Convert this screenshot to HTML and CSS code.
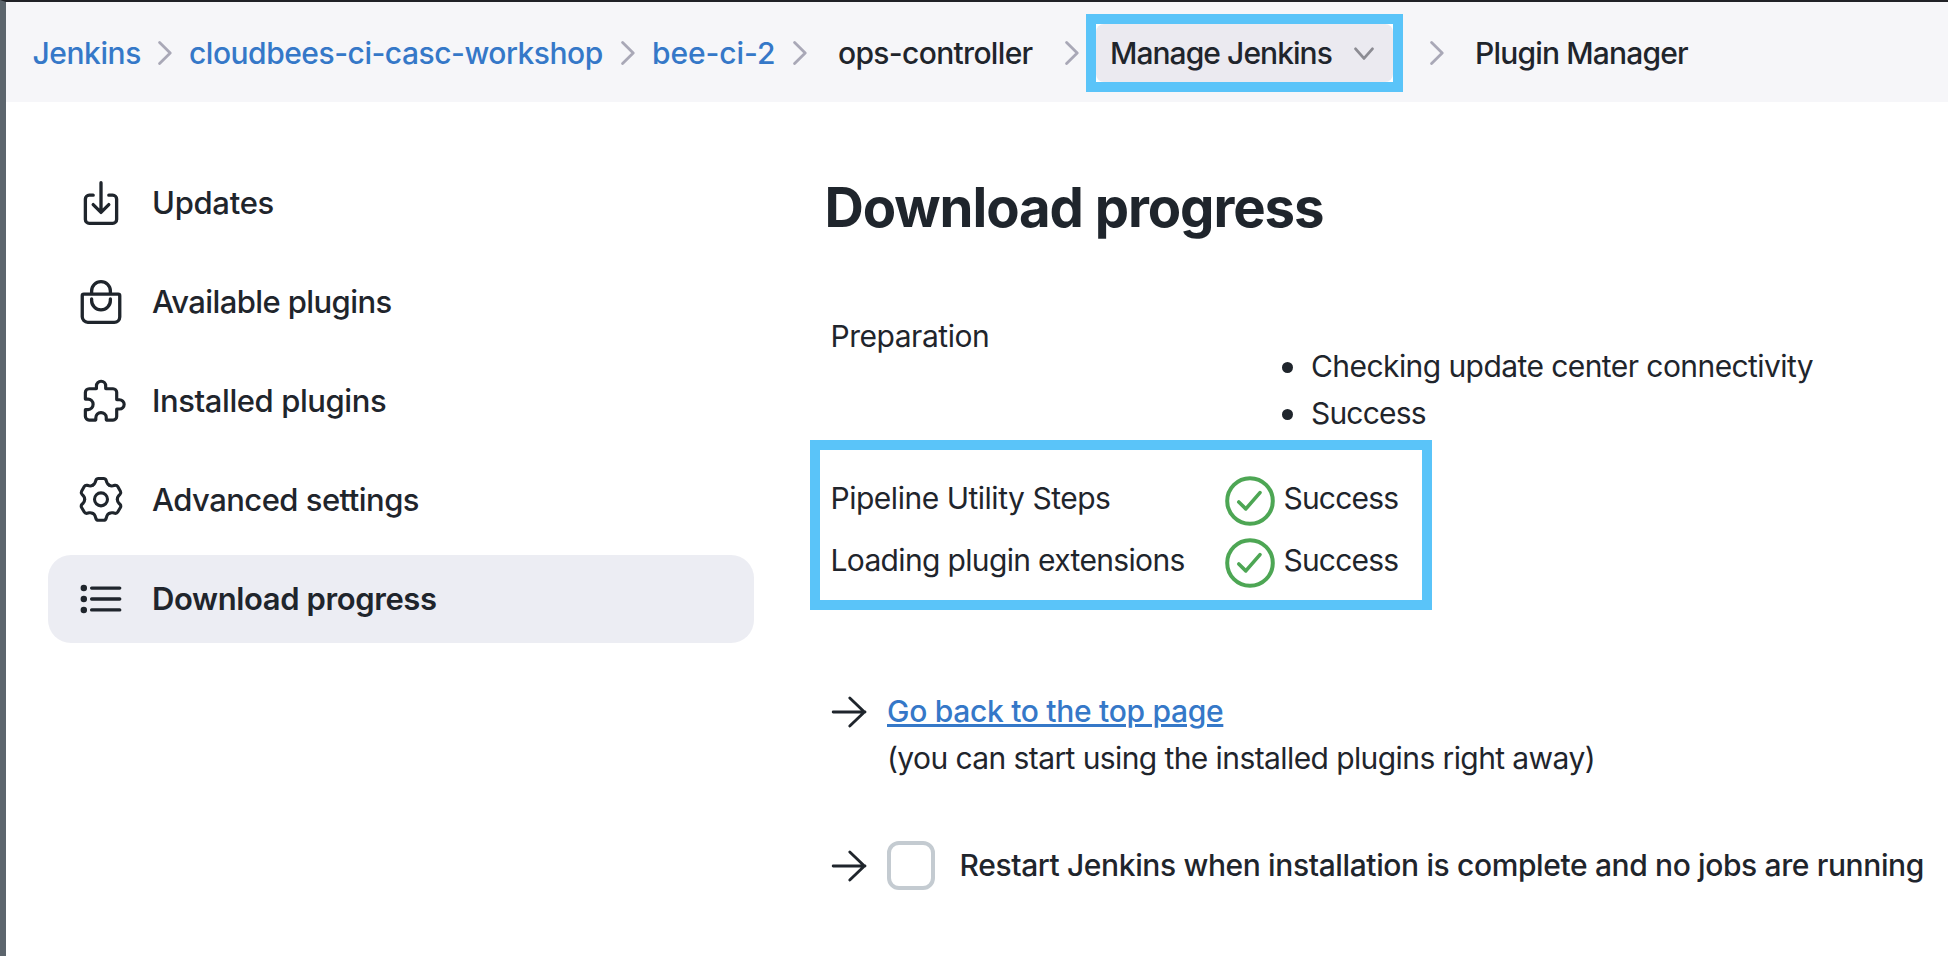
FILE: index.html
```
<!DOCTYPE html>
<html lang="en">
<head>
<meta charset="utf-8">
<title>Download progress - Plugin Manager</title>
<link rel="stylesheet" href="styles.css">
</head>
<body>
<svg class="defs" aria-hidden="true">
  <symbol id="chevron" viewBox="0 0 14 24"><path d="M1.6 1.6L12.2 12 1.6 22.4"/></symbol>
  <symbol id="arrow" viewBox="0 0 36 34"><path d="M2.2 17H34M18.8 3L33.4 17 18.8 31"/></symbol>
  <symbol id="success" viewBox="0 0 50 50"><circle cx="25" cy="25" r="22.8" stroke-width="4"/><path d="M13.8 26l7 6.9L35 16.6" stroke-width="3.6"/></symbol>
</svg>

<header class="breadcrumbs">
  <a class="crumb crumb-link ls-jenkins" href="#">Jenkins</a>
  <svg class="chevron"><use href="#chevron"/></svg>
  <a class="crumb crumb-link ls-workshop" href="#">cloudbees-ci-casc-workshop</a>
  <svg class="chevron"><use href="#chevron"/></svg>
  <a class="crumb crumb-link ls-bee" href="#">bee-ci-2</a>
  <svg class="chevron"><use href="#chevron"/></svg>
  <span class="crumb ls-ops">ops-controller</span>
  <svg class="chevron"><use href="#chevron"/></svg>
  <div class="highlight crumb-highlight">
    <div class="crumb-active">
      <span class="crumb ls-manage">Manage Jenkins</span>
      <svg class="caret" viewBox="0 0 20 14"><path d="M1.6 1.8L10 11.4 18.4 1.8"/></svg>
    </div>
  </div>
  <svg class="chevron"><use href="#chevron"/></svg>
  <span class="crumb ls-plugin">Plugin Manager</span>
</header>

<div class="page">
  <nav class="sidebar">
    <a class="task ls-updates" href="#">
      <svg class="icon" viewBox="0 0 512 512"><path d="M336 176h40a40 40 0 0140 40v208a40 40 0 01-40 40H136a40 40 0 01-40-40V216a40 40 0 0140-40h40M176 272l80 80 80-80M256 48v288"/></svg>
      <span class="task-label">Updates</span>
    </a>
    <a class="task ls-available" href="#">
      <svg class="icon" viewBox="0 0 512 512"><path d="M80 176a16 16 0 00-16 16v216c0 30.24 25.76 56 56 56h272c30.24 0 56-24.51 56-54.75V192a16 16 0 00-16-16zM160 176v-32a96 96 0 01192 0v32M160 224v16a96 96 0 00192 0v-16"/></svg>
      <span class="task-label">Available plugins</span>
    </a>
    <a class="task ls-installed" href="#">
      <svg class="icon" viewBox="0 0 512 512"><path transform="translate(50 8) scale(.955)" d="M413.66 246.1H386a2 2 0 01-2-2v-77.24A38.86 38.86 0 00345.14 128H267.9a2 2 0 01-2-2V98.34c0-27.14-21.5-49.86-48.64-50.33a49.53 49.53 0 00-50.4 49.51V126a2 2 0 01-2 2H87.62A39.74 39.74 0 0048 167.62V238a2 2 0 002 2h26.91c29.37 0 53.68 25.48 54.09 54.85.42 29.87-23.51 57.15-53.29 57.15H50a2 2 0 00-2 2v70.38A39.74 39.74 0 0087.62 464H158a2 2 0 002-2v-20.93c0-30.28 24.75-56.35 55-57.06 30.1-.7 57 20.31 57 50.28V462a2 2 0 002 2h71.14A38.86 38.86 0 00384 425.14v-78a2 2 0 012-2h28.48c27.63 0 49.52-22.67 49.52-50.4s-23.2-48.64-50.34-48.64z"/></svg>
      <span class="task-label">Installed plugins</span>
    </a>
    <a class="task ls-advanced" href="#">
      <svg class="icon icon-gear" viewBox="-75 -73 150 150">
        <defs><path id="tooth" d="M-24.5-42.4Q-19.3-45.4-17.3-51L-15.5-57Q-13.4-62.6-8-62.6H8Q13.4-62.6 15.5-57L17.3-51Q19.3-45.4 24.5-42.4"/></defs>
        <use href="#tooth"/><use href="#tooth" transform="rotate(60)"/><use href="#tooth" transform="rotate(120)"/><use href="#tooth" transform="rotate(180)"/><use href="#tooth" transform="rotate(240)"/><use href="#tooth" transform="rotate(300)"/>
        <circle r="19.5"/>
      </svg>
      <span class="task-label">Advanced settings</span>
    </a>
    <a class="task task-active ls-download" href="#">
      <svg class="icon" viewBox="0 0 512 512"><path d="M160 144h288M160 256h288M160 368h288"/><circle cx="80" cy="144" r="16"/><circle cx="80" cy="256" r="16"/><circle cx="80" cy="368" r="16"/></svg>
      <span class="task-label">Download progress</span>
    </a>
  </nav>

  <main class="content">
    <h1 class="title">Download progress</h1>
    <div class="preparation">Preparation</div>
    <ul class="steps">
      <li class="ls-checking">Checking update center connectivity</li>
      <li class="ls-success">Success</li>
    </ul>
    <div class="highlight results">
      <div class="result"><span class="ls-pipeline">Pipeline Utility Steps</span><svg class="status"><use href="#success"/></svg><span class="ls-success">Success</span></div>
      <div class="result"><span class="ls-loading">Loading plugin extensions</span><svg class="status"><use href="#success"/></svg><span class="ls-success">Success</span></div>
    </div>
    <div class="action">
      <svg class="arrow"><use href="#arrow"/></svg>
      <div>
        <a class="back" href="#">Go back to the top page</a>
        <div class="note">(you can start using the installed plugins right away)</div>
      </div>
    </div>
    <label class="action restart">
      <svg class="arrow"><use href="#arrow"/></svg>
      <input class="checkbox" type="checkbox">
      <span class="restart-text">Restart Jenkins when installation is complete and no jobs are running</span>
    </label>
  </main>
</div>
</body>
</html>
```
FILE: styles.css
```
* { box-sizing: border-box; }

body {
  margin: 0;
  height: 956px;
  overflow: hidden;
  border-top: 2px solid #212227;
  border-left: 6px solid #5c656d;
  background: #fff;
  color: #1f252c;
  font: 400 30px/47px Inter, "Liberation Sans", sans-serif;
  white-space: nowrap;
}

a { color: inherit; text-decoration: none; }
svg { display: block; fill: none; stroke: currentColor; stroke-linecap: round; stroke-linejoin: round; }
.defs { position: absolute; width: 0; height: 0; }

.highlight { border: 10px solid #5ac4f9; }

/* Breadcrumb bar */
.breadcrumbs {
  display: grid;
  grid-template-columns: 125px 31.5px 431.5px 31.5px 141px 45px 227px 21px 344px 45px auto;
  align-items: center;
  height: 100px;
  padding: 1px 0 0 26.5px;
  background: #f6f6f9;
}
.crumb { padding-top: 1px; font-weight: 500; }
.crumb-link { color: #3578c8; }
.chevron { width: 14px; height: 24px; color: #a9a8b7; stroke-width: 2.8; }
.crumb-highlight { width: 317px; height: 78px; background: #fff; }
.crumb-active {
  display: flex;
  align-items: center;
  gap: 22.5px;
  height: 58px;
  padding-left: 14px;
  border-radius: 8px;
  background: #ebeaf0;
}
.caret { width: 20px; height: 14px; margin-top: 2px; color: #8c8c93; stroke-width: 2.8; }

/* Page columns */
.page { display: grid; grid-template-columns: 706px 1fr; column-gap: 70.5px; padding-left: 42px; }

.sidebar { display: flex; flex-direction: column; gap: 11px; padding-top: 57px; }
.task {
  display: flex;
  align-items: center;
  gap: 26px;
  height: 88px;
  padding-left: 28px;
  border-radius: 23px;
  font-size: 31px;
  font-weight: 500;
}
.task-active { background: #ecedf3; font-weight: 600; }
.task-label { padding-bottom: 1px; }
.icon { width: 50px; height: 50px; stroke-width: 34; }
.icon-gear { stroke-width: 9.3; }

.content { padding-top: 75px; }
.title { margin: 0 0 76px; font-size: 54.5px; line-height: 60px; letter-spacing: -1.085px; }
.preparation { height: 30px; padding-left: 6px; letter-spacing: -.466px; }

.steps { margin: 0 0 3px 457.5px; padding: 0; list-style: none; }
.steps li { display: flex; align-items: center; gap: 18px; height: 47px; }
.steps li::before { content: ""; width: 11px; height: 11px; margin-top: 2px; border-radius: 50%; background: #1f252c; }

.results { width: 622px; height: 170px; margin-left: -14.5px; padding: 18px 0 0 10.5px; }
.result { display: grid; grid-template-columns: 394px 59px auto; align-items: center; height: 61.5px; }
.status { width: 50px; height: 50px; margin-top: 5px; color: #4da654; }

.action { display: grid; grid-template-columns: 56px auto; margin: 78px 0 0 6.5px; }
.arrow { width: 36px; height: 34px; margin-top: 6.5px; stroke-width: 2.9; }
.back {
  color: #3578c8;
  font-weight: 500;
  letter-spacing: -.295px;
  text-decoration: underline;
  text-decoration-thickness: 3px;
  text-underline-offset: 2px;
}
.note { letter-spacing: -.59px; }

.restart { grid-template-columns: 56px 72.5px auto; align-items: center; margin-top: 59px; }
.restart .arrow { margin-top: 0; }
.checkbox { appearance: none; width: 48px; height: 49px; margin: 0; border: 4px solid #c4cbd1; border-radius: 12px; background: #fff; }
.restart-text { font-weight: 500; letter-spacing: -.38px; }

/* Tracking */
.ls-jenkins { letter-spacing: -.434px; }
.ls-workshop { letter-spacing: -.484px; }
.ls-bee { letter-spacing: -.073px; }
.ls-ops { letter-spacing: -.667px; }
.ls-manage { letter-spacing: -.947px; }
.ls-plugin { letter-spacing: -.82px; }
.ls-updates { letter-spacing: -.3px; }
.ls-available { letter-spacing: -.6px; }
.ls-installed { letter-spacing: -.42px; }
.ls-advanced { letter-spacing: -.53px; }
.ls-download { letter-spacing: -.39px; }
.ls-checking { letter-spacing: -.57px; }
.ls-success { letter-spacing: -.815px; }
.ls-pipeline { letter-spacing: -.482px; }
.ls-loading { letter-spacing: -.659px; }
```
